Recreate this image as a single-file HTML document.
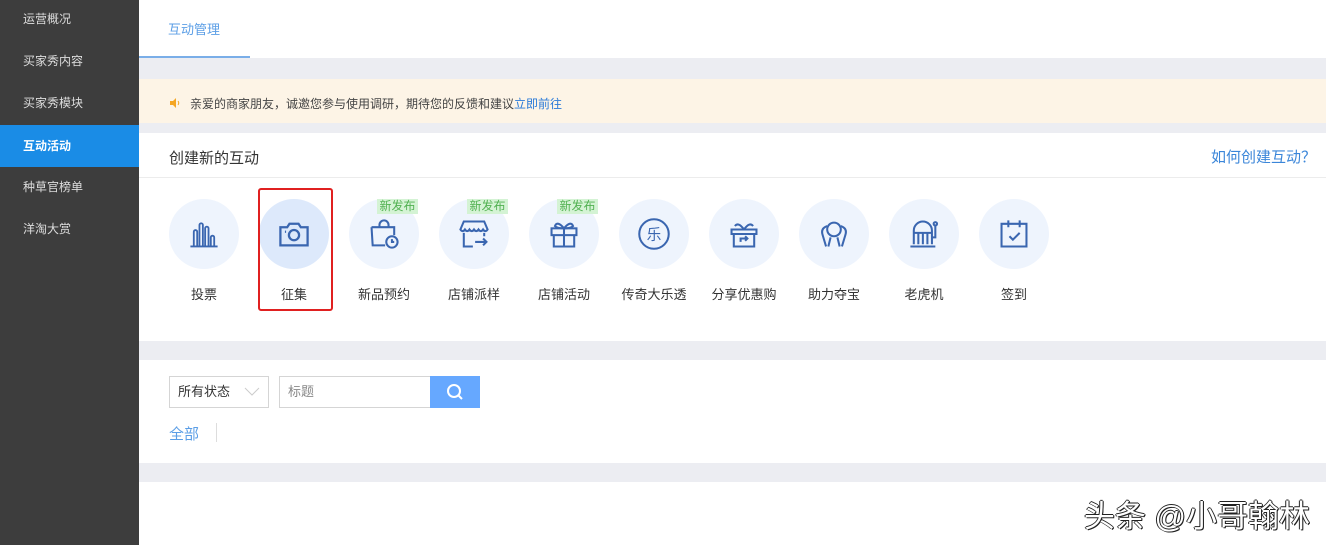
<!DOCTYPE html>
<html><head><meta charset="utf-8"><style>
*{margin:0;padding:0;box-sizing:border-box}
body{width:1326px;height:545px;overflow:hidden;background:#fff;font-family:"Liberation Sans","Noto Sans CJK SC",sans-serif;position:relative}
.side{position:absolute;left:0;top:0;width:139px;height:545px;background:#3d3d3d}
.side div{position:absolute;left:0;width:139px;height:42px;line-height:42px;padding-left:23px;font-size:12px;color:#ddd}
.side .on{background:#1a8ce6;color:#fff;font-weight:bold}
.main{position:absolute;left:139px;top:0;right:0;bottom:0}
.band{position:absolute;left:0;right:0;background:#ecedf2}
.abs{position:absolute}
.circ{position:absolute;width:70px;height:70px;border-radius:50%;background:#eef4fd;top:199px}
.circ svg{position:absolute;left:18px;top:18px}
.lbl{position:absolute;top:284px;width:90px;text-align:center;font-size:13px;color:#333}
.badge{position:absolute;top:199px;width:41px;height:15px;background:#d4f3d4;color:#52b152;font-size:12px;line-height:15px;text-align:center}
</style></head><body>
<div class="side">
<div style="top:-2px">运营概况</div>
<div style="top:40px">买家秀内容</div>
<div style="top:82px">买家秀模块</div>
<div class="on" style="top:125px">互动活动</div>
<div style="top:166px">种草官榜单</div>
<div style="top:208px">洋淘大赏</div>
</div>
<div class="main">
<div class="abs" style="left:29px;top:19px;font-size:13px;color:#5b9ee6">互动管理</div>
<div class="abs" style="left:0;top:56px;width:111px;height:2px;background:#7aaee8"></div>
<div class="band" style="top:58px;height:21px"></div>
<div class="abs" style="left:0;right:0;top:79px;height:44px;background:#fdf4e6"></div>
<svg class="abs" style="left:30px;top:97px" width="12" height="12" viewBox="0 0 12 12"><path d="M1 4h3l3-3v10l-3-3H1z" fill="#f5a623"/><path d="M9 4q1.5 2 0 4" stroke="#f5a623" fill="none"/></svg>
<div class="abs" style="left:51px;top:95px;font-size:12px;color:#444">亲爱的商家朋友，诚邀您参与使用调研，期待您的反馈和建议<span style="color:#2a7ad8">立即前往</span></div>
<div class="band" style="top:123px;height:10px"></div>
<div class="abs" style="left:30px;top:147px;font-size:15px;color:#333">创建新的互动</div>
<div class="abs" style="right:10px;top:147px;font-size:15px;color:#3b86d9;font-family:'Noto Sans CJK SC',sans-serif;line-height:20px">如何创建互动？</div>
<div class="abs" style="left:0;right:0;top:177px;height:1px;background:#ececec"></div>

<div class="circ" style="left:30px"><svg width="34" height="34" viewBox="0 0 30 30" fill="none" stroke="#3a66b0" stroke-width="1.6"><path d="M3 26h24M6 26V13a1.5 1.5 0 013 0v13M11 26V7a1.5 1.5 0 013 0v19M16 26V10a1.5 1.5 0 013 0v16M21 26v-8a1.5 1.5 0 013 0v8"/></svg></div>
<div class="circ" style="left:120px;background:#dde9fb"><svg width="34" height="34" viewBox="0 0 30 30" fill="none" stroke="#3a66b0" stroke-width="2"><path d="M3 9h6l2-3h8l2 3h6v16H3z"/><circle cx="15" cy="16" r="4.5"/><path d="M7 13h1"/></svg></div>
<div class="circ" style="left:210px"><svg width="34" height="34" viewBox="0 0 30 30" fill="none" stroke="#3a66b0" stroke-width="1.8"><path d="M11 9V7a4 4 0 018 0v2M4 9h20v7M4 9l1 16h11"/><circle cx="22" cy="22" r="5"/><path d="M22 19.5V22h2"/></svg></div>
<div class="circ" style="left:300px"><svg width="34" height="34" viewBox="0 0 30 30" fill="none" stroke="#3a66b0" stroke-width="1.8"><path d="M6 4h18l3 7q-2 3-4 0-2 3-4 0-2 3-4 0-2 3-4 0-2 3-4 0-2 3-4 0zM6 14v12h8M24 14v3M16 22h10M23 19l3 3-3 3"/></svg></div>
<div class="circ" style="left:390px"><svg width="34" height="34" viewBox="0 0 30 30" fill="none" stroke="#3a66b0" stroke-width="1.8"><rect x="4" y="10" width="22" height="6"/><path d="M6 16v10h18V16M15 10v16M15 10q-6-7-8-2 2 2 8 2q6-7 8-2-2 2-8 2"/></svg></div>
<div class="circ" style="left:480px"><svg width="34" height="34" viewBox="0 0 30 30" fill="none" stroke="#3a66b0" stroke-width="1.8"><circle cx="15" cy="15" r="13"/><text x="15" y="20" font-size="13" fill="#3a66b0" stroke="none" text-anchor="middle" font-family="Noto Sans CJK SC">乐</text></svg></div>
<div class="circ" style="left:570px"><svg width="34" height="34" viewBox="0 0 30 30" fill="none" stroke="#3a66b0" stroke-width="1.8"><path d="M4 11h22v4H4zM6 15v11h18V15M15 11q-5-7-8-3M15 11q5-7 8-3M12 22v-3h6M16 17l2 2-2 2"/></svg></div>
<div class="circ" style="left:660px"><svg width="34" height="34" viewBox="0 0 30 30" fill="none" stroke="#3a66b0" stroke-width="1.8"><circle cx="15" cy="11" r="6"/><path d="M9 8q-6 2-4 8l3 10M21 8q6 2 4 8l-3 10M12 18l-2 8M18 18l2 8"/></svg></div>
<div class="circ" style="left:750px"><svg width="34" height="34" viewBox="0 0 30 30" fill="none" stroke="#3a66b0" stroke-width="1.8"><path d="M6 24V12a8 8 0 0116 0v12M3 26h22M6 14h16M10 14v10M14 14v10M18 14v10M22 18h3V8"/><circle cx="25" cy="6" r="1.5"/></svg></div>
<div class="circ" style="left:840px"><svg width="34" height="34" viewBox="0 0 30 30" fill="none" stroke="#3a66b0" stroke-width="1.8"><path d="M4 6h22v20H4zM10 3v6M20 3v6M11 17l3 3 6-6"/></svg></div>

<div class="badge" style="left:238px">新发布</div>
<div class="badge" style="left:328px">新发布</div>
<div class="badge" style="left:418px">新发布</div>

<div class="lbl" style="left:20px">投票</div>
<div class="lbl" style="left:110px">征集</div>
<div class="lbl" style="left:200px">新品预约</div>
<div class="lbl" style="left:290px">店铺派样</div>
<div class="lbl" style="left:380px">店铺活动</div>
<div class="lbl" style="left:470px">传奇大乐透</div>
<div class="lbl" style="left:560px">分享优惠购</div>
<div class="lbl" style="left:650px">助力夺宝</div>
<div class="lbl" style="left:740px">老虎机</div>
<div class="lbl" style="left:830px">签到</div>
<div class="abs" style="left:119px;top:188px;width:75px;height:123px;border:2px solid #e02020;border-radius:3px"></div>

<div class="band" style="top:341px;height:19px"></div>
<div class="abs" style="left:30px;top:376px;width:100px;height:32px;border:1px solid #d5d5d5;font-size:13px;color:#333;line-height:30px;padding-left:8px">所有状态<svg style="position:absolute;right:8px;top:10px" width="16" height="9" viewBox="0 0 16 9"><path d="M1 1l7 7 7-7" stroke="#ccc" fill="none"/></svg></div>
<div class="abs" style="left:140px;top:376px;width:152px;height:32px;border:1px solid #d5d5d5;font-size:13px;color:#888;line-height:30px;padding-left:8px">标题</div>
<div class="abs" style="left:291px;top:376px;width:50px;height:32px;background:#66a8ff"><svg style="position:absolute;left:16px;top:7px" width="18" height="18" viewBox="0 0 18 18"><circle cx="8" cy="8" r="6" stroke="#fff" stroke-width="2" fill="none"/><path d="M12.5 12.5l3.5 3.5" stroke="#fff" stroke-width="2"/></svg></div>
<div class="abs" style="left:30px;top:423px;font-size:15px;color:#5b9ee6">全部</div>
<div class="abs" style="left:77px;top:423px;width:1px;height:19px;background:#ddd"></div>
<div class="band" style="top:463px;height:19px"></div>
<div class="abs" style="right:16px;top:491px;font-size:31px;color:#fff;text-shadow:1px 1px 0 #222,-1px 0 0 #222,0 -1px 0 #222,1px 0 0 #222;white-space:nowrap">头条 @小哥翰林</div>
</div>
</body></html>
